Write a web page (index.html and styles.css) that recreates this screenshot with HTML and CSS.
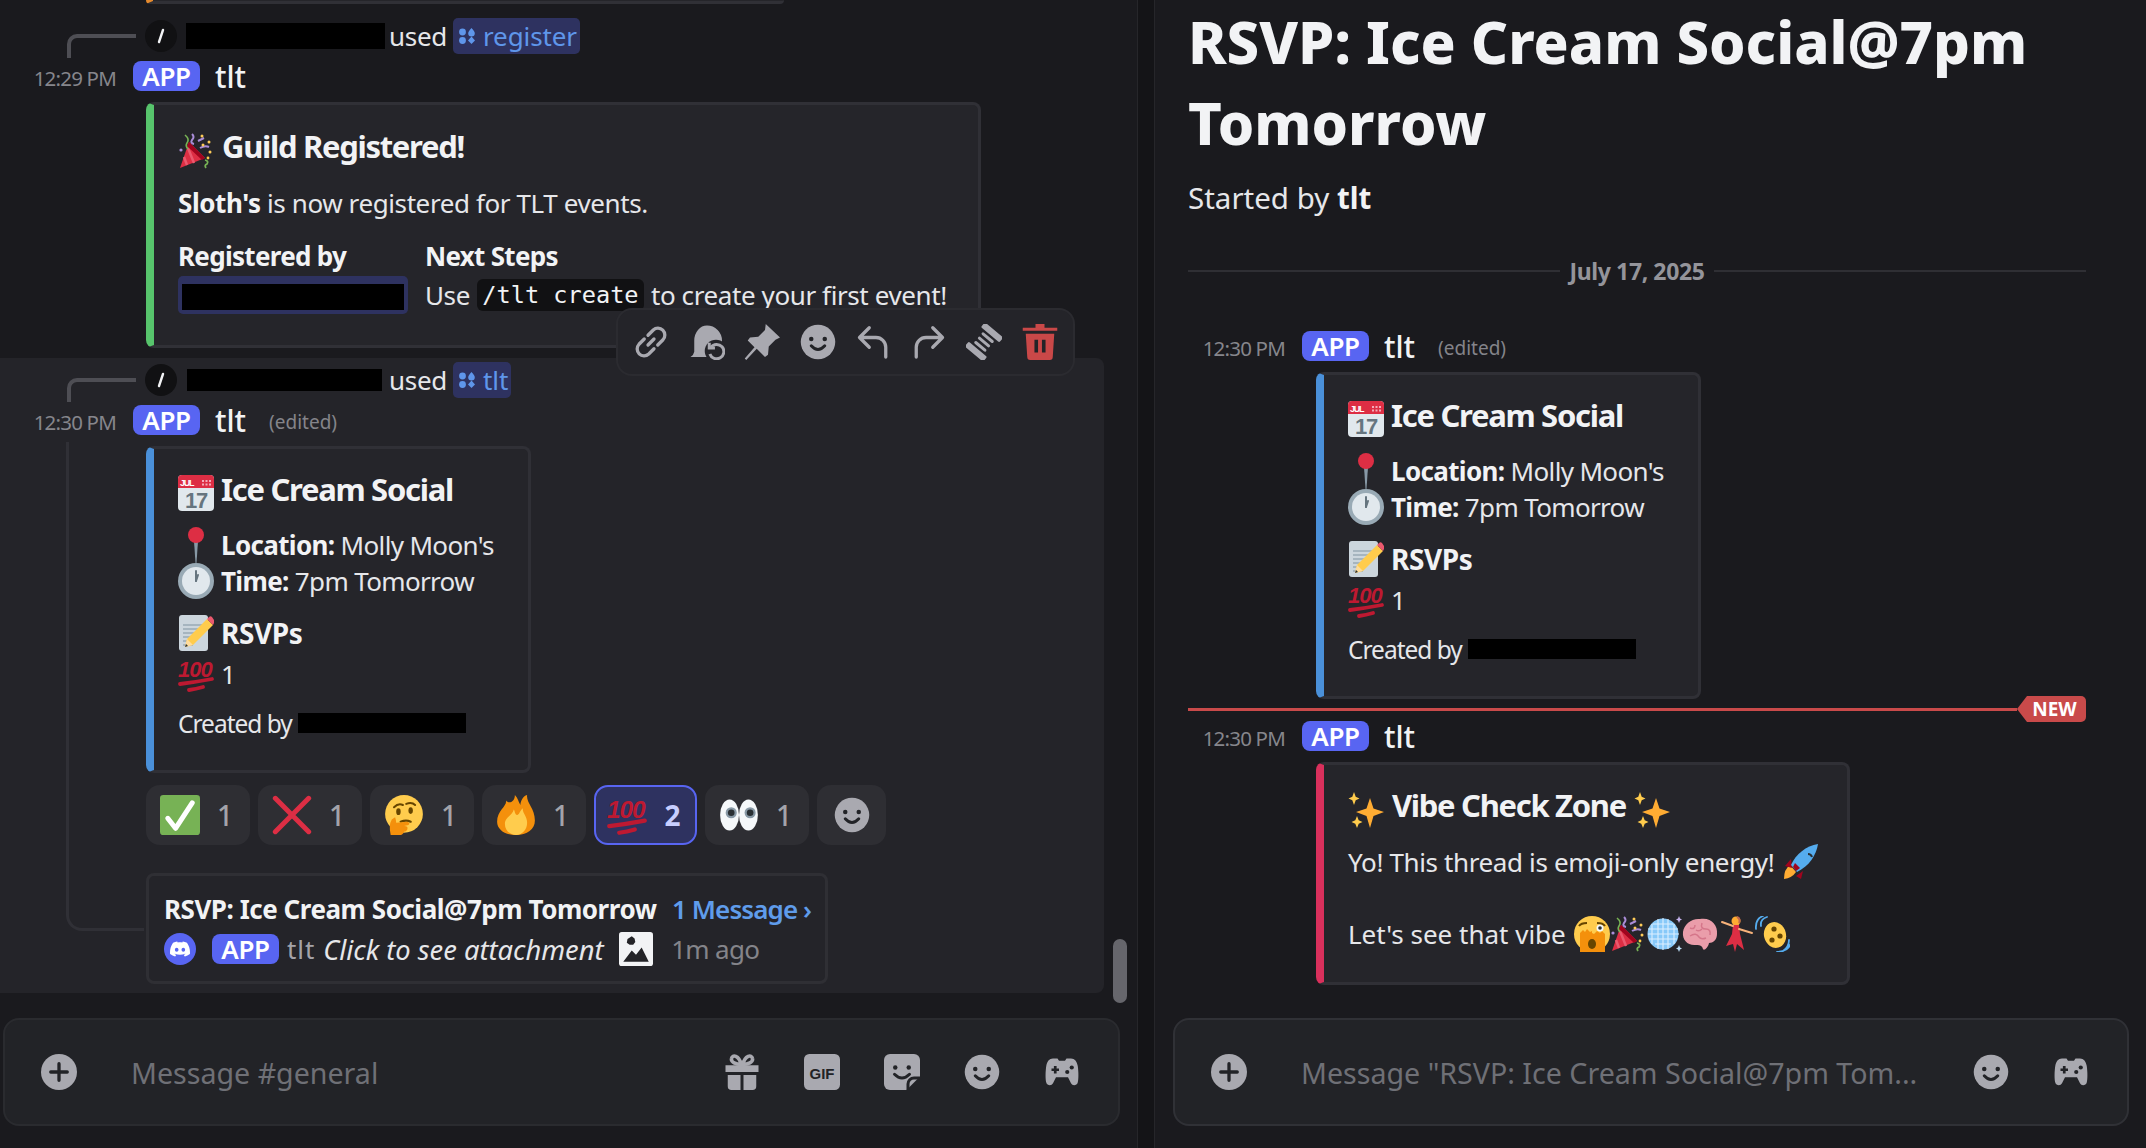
FILE: index.html
```html
<!DOCTYPE html>
<html lang="en">
<head>
<meta charset="utf-8">
<title>Discord thread</title>
<link rel="stylesheet" href="styles.css">
</head>
<body>
<svg class="sprite" xmlns="http://www.w3.org/2000/svg">
  <symbol id="e-party" viewBox="0 0 36 36">
    <path d="M2 35 L11 9 L27 25 Z" fill="#dd2e44"/>
    <path d="M6 24 L9 32 M10 15 L16 30" stroke="#ea596e" stroke-width="2.5" fill="none"/>
    <path d="M11 9 L27 25 L24 27 L9 13 Z" fill="#a0041e"/>
    <path d="M7 2 q5 4 2 8 q-2 3 1 6" stroke="#77b255" stroke-width="1.6" fill="none"/>
    <path d="M14 1 q3 3 0 6 q-2 3 2 4 M20 8 l6 -3 M22 15 q5-3 9 -1" stroke="#aa8dd8" stroke-width="2" fill="none"/>
    <path d="M27 27 q4 1 2 4 q-3 1 -1 4" stroke="#77b255" stroke-width="1.8" fill="none"/>
    <circle cx="24" cy="3" r="1.5" fill="#fdcb58"/><circle cx="31" cy="9" r="1.5" fill="#fdcb58"/><circle cx="25" cy="12" r="1.5" fill="#fdcb58"/><circle cx="32" cy="19" r="1.5" fill="#fdcb58"/><circle cx="3" cy="17" r="1.6" fill="#aa8dd8"/><circle cx="30" cy="25" r="1.4" fill="#ffcc4d"/>
  </symbol>
  <symbol id="e-cal" viewBox="0 0 36 36">
    <rect y="0" width="36" height="36" rx="4" fill="#e1e8ed"/>
    <path d="M0 13V4a4 4 0 0 1 4-4h28a4 4 0 0 1 4 4v9z" fill="#dd2e44"/>
    <text x="2" y="10.500" class="cal-m">JUL</text>
    <path d="M24 5h2v2h-2zM27.500 5h2v2h-2zM31 5h2v2h-2zM24 8.500h2v2h-2zM27.500 8.500h2v2h-2zM31 8.500h2v2h-2z" fill="#f4abba"/>
    <text x="18" y="33" class="cal-d">17</text>
  </symbol>
  <symbol id="e-pin" viewBox="0 0 36 36">
    <path d="M16 14h4l-1.500 22h-1z" fill="#8899a6"/>
    <circle cx="18" cy="8" r="8" fill="#dd2e44"/>
  </symbol>
  <symbol id="e-clock" viewBox="0 0 36 36">
    <circle cx="18" cy="18" r="18" fill="#99aab5"/>
    <circle cx="18" cy="18" r="14" fill="#e1e8ed"/>
    <path d="M18 18V8" stroke="#66757f" stroke-width="2" stroke-linecap="round"/>
    <path d="M18 18l2-6" stroke="#66757f" stroke-width="2" stroke-linecap="round"/>
  </symbol>
  <symbol id="e-memo" viewBox="0 0 36 36">
    <rect x="1" y="0" width="29" height="36" rx="3" fill="#ccd6dd"/>
    <path d="M5 10h20M5 14h20M5 18h20M5 22h14M5 26h10M5 30h10" stroke="#99aab5" stroke-width="1.500"/>
    <path d="M9 24 L29 4 L35 10 L15 30 L7 32 Z" fill="#ffcc4d"/>
    <path d="M29 4l2-2a2 2 0 0 1 3 0l2 3a2 2 0 0 1 0 3l-1 2z" fill="#ea596e"/>
    <path d="M9 24l6 6-8 2z" fill="#ffdc9b"/><path d="M8 29l2 2-3 1z" fill="#292f33"/>
  </symbol>
  <symbol id="e-100" viewBox="0 0 36 36">
    <text x="0" y="21" class="hundred">100</text>
    <path d="M2 28 Q18 26 34 23" stroke="#be1931" stroke-width="3.800" stroke-linecap="round" fill="none"/>
    <path d="M11 34 Q18 33 25 31" stroke="#be1931" stroke-width="3.800" stroke-linecap="round" fill="none"/>
  </symbol>
  <symbol id="e-check" viewBox="0 0 36 36">
    <rect width="36" height="36" rx="3" fill="#77b255"/>
    <path d="M7 21 L14 30 L29 7" stroke="#fff" stroke-width="4.500" fill="none" stroke-linecap="round" stroke-linejoin="round"/>
  </symbol>
  <symbol id="e-cross" viewBox="0 0 36 36">
    <path d="M3 3 L33 33 M33 3 L3 33" stroke="#dd2e44" stroke-width="4.500" stroke-linecap="round"/>
  </symbol>
  <symbol id="e-think" viewBox="0 0 36 36">
    <circle cx="18" cy="17" r="17" fill="#ffcc4d"/>
    <path d="M9 11 q4-4 8 -2 M20 8 q5-2 8 1" stroke="#664500" stroke-width="1.800" fill="none" stroke-linecap="round"/>
    <ellipse cx="13" cy="15" rx="2" ry="3" fill="#664500"/><ellipse cx="24" cy="14" rx="2" ry="3" fill="#664500"/>
    <path d="M15 24 q5-2 9 0" stroke="#664500" stroke-width="2" fill="none" stroke-linecap="round"/>
    <path d="M6 36 q-2 -9 1 -14 l3 -2 q1 3 1 5 l10 -1 q3 1 1 3 l-4 1 q4 0 3 3 q-1 2 -3 2 q-1 3 -4 3z" fill="#f4900c"/>
  </symbol>
  <symbol id="e-fire" viewBox="0 0 36 36">
    <path d="M35 23 C35 12 27 7 28 0 C24 1 22 6 22 9 C20 6 20 3 17 0 C17 7 11 8 9 5 C10 10 1 14 1 24 C1 31 8 36 18 36 C28 36 35 31 35 23Z" fill="#f4900c"/>
    <path d="M28 25 C28 19 24 17 24 12 C21 15 21 18 19 18 C17 18 17 14 16 13 C15 18 8 20 8 26 C8 32 13 36 18 36 C24 36 28 31 28 25Z" fill="#ffcc4d"/>
  </symbol>
  <symbol id="e-eyes" viewBox="0 0 36 36">
    <ellipse cx="9.500" cy="18" rx="8.500" ry="14" fill="#f5f8fa"/>
    <ellipse cx="26.500" cy="18" rx="8.500" ry="14" fill="#f5f8fa"/>
    <circle cx="11" cy="16" r="5" fill="#8899a6"/><circle cx="28" cy="16" r="5" fill="#8899a6"/>
    <circle cx="11" cy="16" r="3" fill="#292f33"/><circle cx="28" cy="16" r="3" fill="#292f33"/>
  </symbol>
  <symbol id="e-spark" viewBox="0 0 36 36">
    <path d="M22 6 L25.500 16.500 L36 20 L25.500 24 L22 36 L18.500 24 L8 20 L18.500 16.500 Z" fill="#ffac33"/>
    <path d="M6 0 L7.700 4.800 L11.500 6.500 L7.700 8.200 L6 13 L4.300 8.200 L.5 6.500 L4.300 4.800 Z" fill="#ffcc4d"/>
    <path d="M9 24 L10.700 28.300 L14.500 30 L10.700 31.700 L9 36 L7.300 31.700 L3.500 30 L7.300 28.300 Z" fill="#ffcc4d"/>
  </symbol>
  <symbol id="e-rocket" viewBox="0 0 36 36">
    <path d="M2 35 Q2 25 8 21 L14 28 Q10 34 2 35Z" fill="#ffac33"/>
    <path d="M9 15 L3 22 L10 24Z M21 27 L19 35 L14 32Z" fill="#a0041e"/>
    <path d="M36 0 C24 2 14 10 9 21 L15 28 C27 22 34 12 36 0Z" fill="#55acee"/>
    <path d="M11 23 L14 27 L18 24 L13 19Z" fill="#a0041e"/>
    <path d="M26 10 q3 0 4 3" stroke="#292f33" stroke-width="2" fill="none"/>
  </symbol>
  <symbol id="e-shock" viewBox="0 0 36 36">
    <circle cx="18" cy="18" r="18" fill="#ffcc4d"/>
    <path d="M5 10 q2-3 8 -3M23 7 q6 0 8 3" stroke="#664500" stroke-width="2" fill="none"/>
    <path d="M6 36 V17 l3 -3 l2 2 l2 -3 l3 3 l2 -1 V36Z" fill="#f4900c"/>
    <path d="M18 36 V17 l2 1 l3 -3 l3 2 l2 -2 l3 3 V36Z" fill="#f4900c"/>
    <circle cx="26" cy="12" r="3.500" fill="#f5f8fa"/><circle cx="26" cy="12" r="1.800" fill="#292f33"/>
    <ellipse cx="18" cy="28" rx="4" ry="5" fill="#664500"/>
  </symbol>
  <symbol id="e-ball" viewBox="0 0 36 36">
    <circle cx="17" cy="18" r="15.500" fill="#88c9f9"/>
    <path d="M2 13h30M2 18h31M3 23h28M7 8h20M9 28h16M12 3v30M22 3v30M6 8v20M28 8v20M17 2v32" stroke="#dcefff" stroke-width="1.100"/>
    <path d="M33 0l1 2.500 2 1-2 1-1 2.500-1-2.500-2-1 2-1z" fill="#c6b3ee"/>
    <path d="M33 29l1 2.500 2 1-2 1-1 2.500-1-2.500-2-1 2-1z" fill="#bbddf5"/>
  </symbol>
  <symbol id="e-brain" viewBox="0 0 36 36">
    <path d="M18 3 C29 1 36 9 35 18 C35 24 31 27 27 27 C26 32 22 35 21 33 C20 30 19 29 14 29 C6 30 0 24 1 16 C2 8 10 2 18 3Z" fill="#ea9daa"/>
    <path d="M8 12 q5 2 5 -3 M20 7 q-2 6 4 6 q5 0 4 6 M8 20 q6-4 9 1 q2 3 7 1 M14 14 q3 2 6 -1" stroke="#d5768a" stroke-width="1.500" fill="none"/>
  </symbol>
  <symbol id="e-dancer" viewBox="0 0 36 36">
    <circle cx="18" cy="5" r="4.500" fill="#ffac33"/>
    <path d="M15 9 L21 9 L22 18 L26 34 L19 28 L17 36 L15 28 L8 30 L14 18Z" fill="#dd2e44"/>
    <path d="M15 10 L4 6 M21 13 L34 17" stroke="#f7b27a" stroke-width="2" stroke-linecap="round"/>
    <path d="M19 1 q4 2 2 6" stroke="#c1694f" stroke-width="2" fill="none"/>
  </symbol>
  <symbol id="e-dizzy" viewBox="0 0 36 36">
    <ellipse cx="21" cy="19" rx="11" ry="13" transform="rotate(-15 21 19)" fill="#ffcc4d"/>
    <circle cx="20" cy="13" r="2.600" fill="#664500"/><circle cx="26" cy="20" r="2.600" fill="#664500"/><circle cx="18" cy="24" r="2.600" fill="#664500"/>
    <path d="M7 10 Q6 3 13 1 M2 13 Q1 3 9 0" stroke="#55acee" stroke-width="1.800" fill="none" stroke-linecap="round"/>
    <path d="M29 35 Q35 31 35 24 M23 36 Q34 35 36 29" stroke="#55acee" stroke-width="1.800" fill="none" stroke-linecap="round"/>
  </symbol>

  <symbol id="i-slash" viewBox="0 0 32 32">
    <circle cx="16" cy="16" r="16" fill="#111113"/>
    <path d="M18 10 L14 22" stroke="#f2f3f5" stroke-width="2.400" stroke-linecap="round"/>
  </symbol>
  <symbol id="i-cmd" viewBox="0 0 18 18">
    <circle cx="4.500" cy="5" r="3.400"/><path d="M13.500 1 Q17 5 16.800 6.200 A3.300 3.300 0 0 1 10.200 6.200 Q10 5 13.500 1Z"/>
    <circle cx="4.500" cy="13.500" r="3.400"/><path d="M13.500 9.500 L17 13.500 L13.500 17 L10 13.500Z"/>
  </symbol>
  <symbol id="i-smile" viewBox="0 0 24 24">
    <circle cx="12" cy="12" r="11.500"/>
    <circle cx="7.500" cy="10" r="1.500" class="dark"/><circle cx="16.500" cy="10" r="1.500" class="dark"/>
    <path d="M7.500 14.500 Q12 19.500 16.500 14.500" class="dark-s" stroke-width="2" fill="none" stroke-linecap="round"/>
  </symbol>
  <symbol id="i-plus" viewBox="0 0 24 24">
    <circle cx="12" cy="12" r="12"/>
    <path d="M12 6.500v11M6.500 12h11" class="dark-s" stroke-width="2.200" stroke-linecap="round"/>
  </symbol>
  <symbol id="i-gift" viewBox="0 0 24 24">
    <path d="M1 7.500h22v4.500H1zM2.500 14h8.500v10H5a2.500 2.500 0 0 1-2.500-2.500zM13 14h8.500v7.500a2.500 2.500 0 0 1-2.500 2.500h-6z"/>
    <path d="M11.500 7 C10 1 5.500 0 5 3 C4.500 5.500 8 7 11.500 7Z M12.500 7 C14 1 18.500 0 19 3 C19.500 5.500 16 7 12.500 7Z" fill="none" stroke="#a9a9b0" stroke-width="2.400"/>
  </symbol>
  <symbol id="i-gif" viewBox="0 0 24 24">
    <rect x="0" y="0" width="24" height="24" rx="3.500"/>
    <text x="12" y="16.500" class="gif-t">GIF</text>
  </symbol>
  <symbol id="i-sticker" viewBox="0 0 24 24">
    <path d="M4 0h16a4 4 0 0 1 4 4v11l-9 9H4a4 4 0 0 1-4-4V4a4 4 0 0 1 4-4Z"/>
    <circle cx="7.500" cy="9" r="1.500" class="dark"/><circle cx="16.500" cy="9" r="1.500" class="dark"/>
    <path d="M7 13.500 Q12 18.500 17 13.500" class="dark-s" stroke-width="2" fill="none" stroke-linecap="round"/>
    <path d="M16 24 V20 a4 4 0 0 1 4-4 h4" class="dark-s" stroke-width="2" fill="none"/>
  </symbol>
  <symbol id="i-game" viewBox="0 0 24 24">
    <path d="M6 3 h3 l1 1.500 h4 l1-1.500 h3 c2.500 0 4 2 4.500 5 c.6 4 .6 9 0 11 c-.5 2-3.500 2.500-4.500 .5 l-2-4 H8 l-2 4 c-1 2-4 1.500-4.500 -.5 c-.6 -2-.6-7 0-11 C2 5 3.500 3 6 3Z"/>
    <path d="M7.500 8v5M5 10.500h5" class="dark-s" stroke-width="1.800"/>
    <circle cx="15.500" cy="12" r="1.400" class="dark"/><circle cx="18.500" cy="9" r="1.400" class="dark"/>
  </symbol>
  <symbol id="i-link" viewBox="0 0 24 24">
    <path d="M10 7.500 L13.500 4 a4.600 4.600 0 0 1 6.500 6.500 L16.500 14 M14 16.500 L10.500 20 a4.600 4.600 0 0 1-6.500-6.500 L7.500 10 M10 14 L14 10" fill="none" stroke="#a9a9b0" stroke-width="2.200" stroke-linecap="round"/>
  </symbol>
  <symbol id="i-unread" viewBox="0 0 24 24">
    <path d="M12 1 a10 10 0 0 1 10 10 v11 H1 q2-1 2.500-3.500 V11 A8.500 10 0 0 1 12 1Z"/>
    <circle cx="18" cy="18" r="7.500" class="panel"/>
    <path d="M14.600 15.500 a4.800 4.800 0 1 1-.7 4.500" fill="none" stroke="#a9a9b0" stroke-width="2"/>
    <path d="M13.500 12.500 v3.500 h3.800" fill="none" stroke="#a9a9b0" stroke-width="2"/>
  </symbol>
  <symbol id="i-pin" viewBox="0 0 24 24">
    <path d="M14.500 0 L24 9 L21 10.500 L16.500 15 L16 20.500 L14 22 L8.500 16.500 L1.500 24 L0.500 23 L7 15.500 L2.500 11 L4 9 L9.500 8.500 L14 4Z"/>
  </symbol>
  <symbol id="i-reply" viewBox="0 0 24 24">
    <path d="M3 9h11a6.500 6.500 0 0 1 6.500 6.500V22M9.500 2.500 3 9l6.500 6.500" fill="none" stroke="#a9a9b0" stroke-width="2.200" stroke-linecap="round" stroke-linejoin="round"/>
  </symbol>
  <symbol id="i-forward" viewBox="0 0 24 24">
    <path d="M21 9H10a6.500 6.500 0 0 0-6.500 6.500V22M14.500 2.500 21 9l-6.500 6.500" fill="none" stroke="#a9a9b0" stroke-width="2.200" stroke-linecap="round" stroke-linejoin="round"/>
  </symbol>
  <symbol id="i-spool" viewBox="0 0 24 24">
    <g transform="rotate(40 12 12)">
      <rect x="4" y="1.500" width="16" height="4.200" rx="1"/>
      <rect x="7" y="7.200" width="10" height="2" rx="1"/>
      <rect x="7" y="11" width="10" height="2" rx="1"/>
      <rect x="7" y="14.800" width="10" height="2" rx="1"/>
      <rect x="4" y="18.300" width="16" height="4.200" rx="1"/>
    </g>
  </symbol>
  <symbol id="i-trash" viewBox="0 0 24 24">
    <path d="M9 0h6v2.500h8.500v2H.5v-2H9z"/>
    <path d="M2.500 6.500h19l-1 15.500a2 2 0 0 1-2 2H5.500a2 2 0 0 1-2-2z"/>
    <path d="M9.500 10.500v8.500M14.500 10.500v8.500" class="dark-s" stroke-width="2.400"/>
  </symbol>
  <symbol id="i-discord" viewBox="0 0 24 24">
    <path d="M20.317 4.3698a19.7913 19.7913 0 00-4.8851-1.5152.0741.0741 0 00-.0785.0371c-.211.3753-.4447.8648-.6083 1.2495-1.8447-.2762-3.68-.2762-5.4868 0-.1636-.3933-.4058-.8742-.6177-1.2495a.077.077 0 00-.0785-.037 19.7363 19.7363 0 00-4.8852 1.515.0699.0699 0 00-.0321.0277C.5334 9.0458-.319 13.5799.0992 18.0578a.0824.0824 0 00.0312.0561c2.0528 1.5076 4.0413 2.4228 5.9929 3.0294a.0777.0777 0 00.0842-.0276c.4616-.6304.8731-1.2952 1.226-1.9942a.076.076 0 00-.0416-.1057c-.6528-.2476-1.2743-.5495-1.8722-.8923a.077.077 0 01-.0076-.1277c.1258-.0943.2517-.1923.3718-.2914a.0743.0743 0 01.0776-.0105c3.9278 1.7933 8.18 1.7933 12.0614 0a.0739.0739 0 01.0785.0095c.1202.099.246.1981.3728.2924a.077.077 0 01-.0066.1276 12.2986 12.2986 0 01-1.8732.8914.0766.0766 0 00-.0407.1067c.3604.698.7719 1.3628 1.225 1.9932a.076.076 0 00.0842.0286c1.961-.6067 3.9495-1.5219 6.0023-3.0294a.077.077 0 00.0313-.0552c.5004-5.177-.8382-9.6739-3.5485-13.6604a.061.061 0 00-.0312-.0286zM8.02 15.3312c-1.1825 0-2.1569-1.0857-2.1569-2.419 0-1.3332.9555-2.4189 2.157-2.4189 1.2108 0 2.1757 1.0952 2.1568 2.419 0 1.3332-.9555 2.4189-2.1569 2.4189zm7.9748 0c-1.1825 0-2.1569-1.0857-2.1569-2.419 0-1.3332.9554-2.4189 2.1569-2.4189 1.2108 0 2.1757 1.0952 2.1568 2.419 0 1.3332-.946 2.4189-2.1568 2.4189Z"/>
  </symbol>
  <symbol id="i-image" viewBox="0 0 24 24">
    <rect width="24" height="24" rx="2" fill="#f2f3f5"/>
    <path d="M3 21 L9 13 L12 16 L16 11 L21 21Z" fill="#232327"/>
    <path d="M9 3l2 1.500 .5 2.500-1.500 2-2.500 0-2-1.500 .5-2.500z" fill="#232327"/>
  </symbol>
</svg>

<div class="app">
  <main class="pane pane-left">
    <div class="messages">
      <div class="old-embed"></div>

      <div class="reply reply-first">
        <span class="spine"></span>
        <svg class="slash"><use href="#i-slash"/></svg>
        <span class="redact redact-user"></span>
        <span class="used">used</span>
        <span class="cmd"><svg class="cmd-ic"><use href="#i-cmd"/></svg>register</span>
      </div>
      <div class="head">
        <span class="time">12:29 PM</span><span class="app-tag">APP</span><span class="name">tlt</span>
      </div>
      <section class="embed embed-guild">
        <div class="row title"><svg class="emo"><use href="#e-party"/></svg>Guild Registered!</div>
        <div class="row body-line sloth-line"><span><b>Sloth's</b> is now registered for TLT events.</span></div>
        <div class="fields">
          <div class="field-name">Registered by</div>
          <div class="field-name">Next Steps</div>
          <div class="mention"><span class="redact redact-mention"></span></div>
          <div class="field-val">Use <code>/tlt create</code> to create your first event!</div>
        </div>
      </section>

      <div class="hovered">
        <span class="thread-spine"></span>
        <div class="reply">
          <span class="spine"></span>
          <svg class="slash"><use href="#i-slash"/></svg>
          <span class="redact redact-user2"></span>
          <span class="used">used</span>
          <span class="cmd"><svg class="cmd-ic"><use href="#i-cmd"/></svg>tlt</span>
        </div>
        <div class="head">
          <span class="time">12:30 PM</span><span class="app-tag">APP</span><span class="name">tlt</span><span class="edited">(edited)</span>
        </div>
        <section class="embed embed-event">
          <div class="row title"><svg class="emo"><use href="#e-cal"/></svg>Ice Cream Social</div>
          <div class="row body-line gap-16"><svg class="emo"><use href="#e-pin"/></svg><span><b>Location:</b> Molly Moon's</span></div>
          <div class="row body-line"><svg class="emo"><use href="#e-clock"/></svg><span><b>Time:</b> 7pm Tomorrow</span></div>
          <div class="row title-sm gap-16"><svg class="emo"><use href="#e-memo"/></svg>RSVPs</div>
          <div class="row body-line gap-5"><svg class="emo"><use href="#e-100"/></svg><span>1</span></div>
          <div class="row created">Created by <span class="redact redact-creator"></span></div>
        </section>

        <div class="reactions">
          <div class="react"><svg class="emo"><use href="#e-check"/></svg><span>1</span></div>
          <div class="react"><svg class="emo"><use href="#e-cross"/></svg><span>1</span></div>
          <div class="react"><svg class="emo"><use href="#e-think"/></svg><span>1</span></div>
          <div class="react"><svg class="emo"><use href="#e-fire"/></svg><span>1</span></div>
          <div class="react react-on"><svg class="emo"><use href="#e-100"/></svg><span>2</span></div>
          <div class="react"><svg class="emo"><use href="#e-eyes"/></svg><span>1</span></div>
          <div class="react react-add"><svg class="ic-36 gray"><use href="#i-smile"/></svg></div>
        </div>

        <div class="thread-card">
          <div class="thread-top"><span class="thread-name">RSVP: Ice Cream Social@7pm Tomorrow</span><span class="thread-count">1 Message ›</span></div>
          <div class="thread-bottom">
            <span class="avatar"><svg class="avatar-ic"><use href="#i-discord"/></svg></span>
            <span class="app-tag">APP</span>
            <span class="thread-user">tlt</span>
            <em class="thread-msg">Click to see attachment</em>
            <svg class="thread-img"><use href="#i-image"/></svg>
            <span class="thread-ago">1m ago</span>
          </div>
        </div>
      </div>

      <div class="toolbar">
        <svg class="ic-36 gray"><use href="#i-link"/></svg>
        <svg class="ic-36 gray"><use href="#i-unread"/></svg>
        <svg class="ic-36 gray"><use href="#i-pin"/></svg>
        <svg class="ic-36 gray"><use href="#i-smile"/></svg>
        <svg class="ic-36 gray"><use href="#i-reply"/></svg>
        <svg class="ic-36 gray"><use href="#i-forward"/></svg>
        <svg class="ic-36 gray"><use href="#i-spool"/></svg>
        <svg class="ic-36 red"><use href="#i-trash"/></svg>
      </div>
      <div class="scrollbar"></div>
    </div>

    <div class="composer composer-left">
      <svg class="ic-36 gray"><use href="#i-plus"/></svg>
      <span class="placeholder">Message #general</span>
      <div class="composer-icons">
        <svg class="ic-36 gray"><use href="#i-gift"/></svg>
        <svg class="ic-36 gray"><use href="#i-gif"/></svg>
        <svg class="ic-36 gray"><use href="#i-sticker"/></svg>
        <svg class="ic-36 gray"><use href="#i-smile"/></svg>
        <svg class="ic-36 gray"><use href="#i-game"/></svg>
      </div>
    </div>
  </main>

  <div class="resizer"></div>

  <aside class="pane pane-right">
    <div class="thread-scroll">
      <h1 class="thread-title">RSVP: Ice Cream Social@7pm Tomorrow</h1>
      <p class="started">Started by <b>tlt</b></p>
      <div class="date-div"><span>July 17, 2025</span></div>

      <div class="head head-r1">
        <span class="time">12:30 PM</span><span class="app-tag">APP</span><span class="name">tlt</span><span class="edited">(edited)</span>
      </div>
      <section class="embed embed-event embed-r">
        <div class="row title"><svg class="emo"><use href="#e-cal"/></svg>Ice Cream Social</div>
        <div class="row body-line gap-16"><svg class="emo"><use href="#e-pin"/></svg><span><b>Location:</b> Molly Moon's</span></div>
        <div class="row body-line"><svg class="emo"><use href="#e-clock"/></svg><span><b>Time:</b> 7pm Tomorrow</span></div>
        <div class="row title-sm gap-16"><svg class="emo"><use href="#e-memo"/></svg>RSVPs</div>
        <div class="row body-line gap-5"><svg class="emo"><use href="#e-100"/></svg><span>1</span></div>
        <div class="row created">Created by <span class="redact redact-creator"></span></div>
      </section>

      <div class="new-div"><span class="new-line"></span><span class="new-tag">NEW</span></div>

      <div class="head head-r2">
        <span class="time">12:30 PM</span><span class="app-tag">APP</span><span class="name">tlt</span>
      </div>
      <section class="embed embed-vibe embed-r">
        <div class="row title"><svg class="emo"><use href="#e-spark"/></svg>Vibe Check Zone<svg class="emo emo-after"><use href="#e-spark"/></svg></div>
        <div class="row body-line vibe-1"><span>Yo! This thread is emoji-only energy!</span><svg class="emo"><use href="#e-rocket"/></svg></div>
        <div class="row body-line vibe-2"><span>Let's see that vibe</span>
          <span class="emo-run">
            <svg class="emo"><use href="#e-shock"/></svg><svg class="emo"><use href="#e-party"/></svg><svg class="emo"><use href="#e-ball"/></svg><svg class="emo"><use href="#e-brain"/></svg><svg class="emo"><use href="#e-dancer"/></svg><svg class="emo"><use href="#e-dizzy"/></svg>
          </span>
        </div>
      </section>
    </div>

    <div class="composer composer-right">
      <svg class="ic-36 gray"><use href="#i-plus"/></svg>
      <span class="placeholder">Message "RSVP: Ice Cream Social@7pm Tom...</span>
      <div class="composer-icons">
        <svg class="ic-36 gray"><use href="#i-smile"/></svg>
        <svg class="ic-36 gray"><use href="#i-game"/></svg>
      </div>
    </div>
  </aside>
</div>
</body>
</html>
```

FILE: styles.css
```css
* { box-sizing: border-box; }
html, body { margin: 0; height: 100%; }
body {
  background: #1a1a1e;
  color: #e6e7ea;
  font-family: "Noto Sans", "Liberation Sans", sans-serif;
  font-size: 26px;
  overflow: hidden;
}
.sprite { display: none; }
.gray { fill: #a9a9b0; color: #a9a9b0; }
.red { fill: #c94848; }
.dark { fill: #222327; }
.dark-s { stroke: #222327; }
.panel { fill: #242429; }
.cal-m { font: 700 9px "Liberation Sans", sans-serif; fill: #fff; }
.cal-d { font: 700 22px "Liberation Sans", sans-serif; fill: #66757f; text-anchor: middle; }
.hundred { font: italic 700 22px "Liberation Sans", sans-serif; fill: #be1931; letter-spacing: -1px; }
.gif-t { font: 700 10px "Liberation Sans", sans-serif; fill: #222327; text-anchor: middle; }

.app { display: flex; height: 1148px; }
.pane { display: flex; flex-direction: column; height: 100%; }
.pane-left { width: 1137px; flex: none; }
.pane-right { flex: 1; min-width: 0; }
.resizer {
  width: 18px;
  flex: none;
  background: #141417;
  border-left: 1px solid #26262a;
  border-right: 1px solid #26262a;
}
.messages { position: relative; flex: 1; min-height: 0; overflow: hidden; }
.thread-scroll { flex: 1; min-height: 0; overflow: hidden; }

.old-embed {
  width: 638px;
  height: 4px;
  margin-left: 146px;
  background: #25252a;
  border-bottom: 3px solid #303036;
  border-left: 7px solid #e58a2e;
  border-radius: 0 0 6px 6px;
}

.reply { display: flex; align-items: flex-start; height: 40px; }
.reply-first { margin-top: 14px; }
.spine {
  flex: none;
  width: 69px;
  height: 24px;
  margin: 16px 8px 0 67px;
  border-top: 4px solid #4e4e54;
  border-left: 4px solid #4e4e54;
  border-radius: 10px 0 0 0;
}
.slash { flex: none; width: 32px; height: 32px; margin: 2px 9px 0 1px; }
.redact { display: inline-block; background: #000; flex: none; }
.redact-user { width: 199px; height: 26px; margin-top: 5px; }
.redact-user2 { width: 195px; height: 22px; margin-top: 7px; margin-left: 1px; margin-right: 3px; }
.used { font-size: 26px; line-height: 36px; margin: 0 6px 0 4px; letter-spacing: -.3px; color: #e6e7ea; }
.cmd {
  display: inline-flex;
  align-items: center;
  height: 36px;
  padding: 0 3px 0 5px;
  background: #2e3260;
  color: #5f96ea;
  font-size: 26px;
  letter-spacing: -.1px;
  border-radius: 5px;
}
.cmd-ic { width: 18px; height: 18px; fill: #5f96ea; margin-right: 7px; }

.head { display: flex; align-items: center; height: 30px; margin-top: 3px; }
.time { width: 116px; padding-top: 4px; text-align: right; margin-right: 17px; font-size: 20.5px; color: #86868c; letter-spacing: -.8px; white-space: nowrap; }
.app-tag {
  flex: none;
  width: 67px;
  height: 30px;
  background: #5865f2;
  color: #fff;
  font-size: 26px;
  font-weight: 600;
  letter-spacing: -.4px;
  line-height: 30px;
  text-align: center;
  border-radius: 8px;
}
.name { margin-left: 15px; font-size: 30px; font-weight: 500; color: #f2f3f5; }
.edited { margin-left: 23px; padding-top: 4px; font-size: 19px; color: #84848a; }

.embed {
  margin-left: 146px;
  margin-top: 11px;
  background: #25252a;
  border: 3px solid #303036;
  border-left: 8px solid #5a9bd8;
  border-radius: 8px;
  padding-left: 24px;
}
.row { display: flex; align-items: center; height: 36px; }
.emo { flex: none; width: 36px; height: 36px; margin-right: 8px; }
.title { align-items: flex-start; font-size: 31px; line-height: 26px; letter-spacing: -1.3px; font-weight: 700; color: #f2f3f5; white-space: nowrap; }
.title-sm { font-size: 28px; font-weight: 700; letter-spacing: -.4px; color: #f2f3f5; }
.body-line { font-size: 26px; letter-spacing: -.4px; color: #e6e7ea; }
.body-line b, .started b { font-weight: 700; color: #f2f3f5; }
.gap-5 { margin-top: 5px; }
.gap-16 { margin-top: 16px; }
.sloth-line { margin-top: 16px; }

.embed-guild { width: 835px; height: 246px; padding-top: 28px; border-left-color: #57c46c; }
.fields { display: grid; grid-template-columns: 247px 1fr; grid-template-rows: 36px 38px; row-gap: 2px; margin-top: 17px; }
.field-name { font-size: 26px; font-weight: 700; letter-spacing: -.7px; color: #f2f3f5; display: flex; align-items: center; }
.mention { width: 230px; height: 38px; background: #2e3260; border-radius: 5px; padding: 8px 4px 0; }
.redact-mention { display: block; width: 222px; height: 26px; }
.field-val { font-size: 26px; letter-spacing: -.4px; display: flex; align-items: center; white-space: pre; }
code {
  display: inline-block;
  margin: 0 1px;
  padding: 0 5px;
  height: 32px;
  background: #111113;
  color: #f2f3f5;
  font: 23.6px/32px "DejaVu Sans Mono", "Liberation Mono", monospace;
  letter-spacing: 0;
  border-radius: 6px;
}

.hovered {
  position: relative;
  width: 1104px;
  height: 635px;
  margin-top: 10px;
  padding-top: 4px;
  background: #242429;
  border-radius: 0 8px 8px 0;
}
.thread-spine {
  position: absolute;
  left: 66px;
  top: 84px;
  width: 78px;
  height: 489px;
  border-left: 3px solid #303036;
  border-bottom: 3px solid #303036;
  border-radius: 0 0 0 16px;
}
.embed-event { width: 385px; height: 327px; padding-top: 26px; border-left-color: #4a90d9; }
.embed-event .title { line-height: 28px; }
.embed-event .emo { margin-right: 7px; }
.embed-event .body-line { letter-spacing: -.65px; }
.created { margin-top: 17px; height: 28px; font-size: 24.5px; letter-spacing: -1px; color: #e6e7ea; white-space: pre; }
.redact-creator { width: 168px; height: 20px; margin-left: 1px; }

.reactions { display: flex; gap: 8px; margin: 12px 0 0 146px; }
.react {
  display: flex;
  align-items: center;
  justify-content: center;
  width: 104px;
  height: 60px;
  padding-right: 3px;
  background: #2e2e33;
  border-radius: 14px;
  color: #a3a3a9;
  font-size: 28px;
  font-weight: 500;
}
.react .emo { width: 40px; height: 40px; margin-right: 17px; }
.react-on { width: 103px; background: #2e3260; border: 2px solid #5865f2; color: #c7ceff; font-weight: 700; }
.react-add { width: 69px; padding-right: 0; }

.thread-card {
  position: relative;
  width: 682px;
  height: 111px;
  margin: 28px 0 0 146px;
  background: #242429;
  border: 3px solid #2f2f34;
  border-radius: 8px;
  padding: 0 0 0 15px;
}
.thread-top { display: flex; align-items: center; height: 36px; margin-top: 15px; }
.thread-name { width: 508px; font-size: 26px; font-weight: 700; letter-spacing: -.47px; color: #f2f3f5; white-space: nowrap; }
.thread-count { font-size: 26px; font-weight: 600; letter-spacing: -.9px; color: #5f9ceb; white-space: nowrap; }
.thread-bottom { display: flex; align-items: center; height: 36px; margin-top: 4px; }
.avatar { flex: none; display: flex; align-items: center; justify-content: center; width: 32px; height: 32px; border-radius: 50%; background: #5865f2; margin-right: 16px; }
.avatar-ic { width: 20px; height: 20px; fill: #fff; }
.thread-user { margin-left: 8px; font-size: 26px; letter-spacing: .9px; color: #a3a3a9; }
.thread-msg { margin-left: 8px; width: 296px; font-size: 27.3px; color: #e6e7ea; white-space: nowrap; }
.thread-img { flex: none; width: 34px; height: 34px; }
.thread-ago { margin-left: 18px; font-size: 26px; letter-spacing: -.7px; color: #84848a; }

.toolbar {
  position: absolute;
  left: 616px;
  top: 308px;
  width: 459px;
  height: 68px;
  display: flex;
  align-items: center;
  justify-content: space-between;
  padding: 0 15px;
  background: #242429;
  border: 2px solid #2b2b30;
  border-radius: 16px;
}
.ic-36 { flex: none; width: 36px; height: 36px; }
.scrollbar { position: absolute; left: 1113px; top: 939px; width: 14px; height: 64px; background: #66666c; border-radius: 7px; }

.composer {
  flex: none;
  display: flex;
  align-items: center;
  height: 108px;
  margin-bottom: 22px;
  padding: 0 38px 0 36px;
  background: #222327;
  border: 2px solid #2a2b2f;
  border-radius: 16px;
}
.composer-left { margin-left: 3px; margin-right: 17px; }
.composer-right { margin-left: 18px; margin-right: 17px; border-color: #303136; }
.placeholder { flex: 1; margin-left: 54px; font-size: 28.6px; color: #6f7076; white-space: nowrap; }
.composer-icons { display: flex; gap: 44px; }

.thread-title { margin: 1px 60px 0 33px; font-size: 58px; line-height: 81px; font-weight: 800; color: #f2f3f5; }
.started { margin: 15px 0 0 33px; font-size: 29.5px; line-height: 40px; color: #e6e7ea; }
.date-div { display: flex; align-items: center; gap: 10px; height: 24px; margin: 41px 60px 0 33px; color: #94949a; font-size: 23px; letter-spacing: -.4px; font-weight: 700; }
.date-div::before, .date-div::after { content: ""; flex: 1; height: 2px; background: #2f2f34; }
.head-r1 { margin-top: 48px; padding-left: 14px; }
.head-r2 { margin-top: -1px; padding-left: 14px; }
.embed-r { margin-left: 161px; }
.new-div { display: flex; align-items: center; height: 26px; margin: -3px 60px 0 33px; }
.new-line { flex: 1; height: 3px; background: #c94a4a; }
.new-tag {
  flex: none;
  width: 69px;
  height: 26px;
  background: #c94a4a;
  color: #fff;
  font-size: 19px;
  font-weight: 700;
  line-height: 26px;
  text-align: center;
  padding-left: 6px;
  clip-path: polygon(10px 0, 100% 0, 100% 100%, 10px 100%, 0 50%);
  border-radius: 0 5px 5px 0;
}
.embed-vibe { width: 534px; height: 223px; padding-top: 27px; border-left-color: #d9305c; }
.emo-after { margin: 0 0 0 8px; }
.vibe-1 { margin-top: 16px; letter-spacing: -.37px; }
.vibe-1 span, .vibe-2 > span:first-child { margin-right: 8px; }
.vibe-2 { margin-top: 36px; letter-spacing: 0; }
.emo-run { display: flex; }
.emo-run .emo { margin-right: 0; }
```
